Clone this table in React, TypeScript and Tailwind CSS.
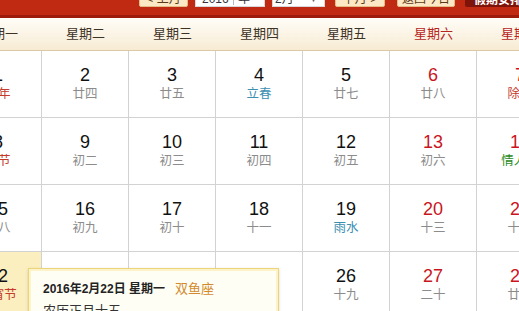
import React from 'react';

type Kind = 'plain' | 'fest' | 'term' | 'green';

interface Day {
  d: number;
  l: string;
  k?: Kind;
  today?: boolean;
}

const weekNames = ['星期一', '星期二', '星期三', '星期四', '星期五', '星期六', '星期日'];

const rows: Day[][] = [
  [
    { d: 1, l: '小年', k: 'fest' },
    { d: 2, l: '廿四' },
    { d: 3, l: '廿五' },
    { d: 4, l: '立春', k: 'term' },
    { d: 5, l: '廿七' },
    { d: 6, l: '廿八' },
    { d: 7, l: '除夕', k: 'fest' },
  ],
  [
    { d: 8, l: '春节', k: 'fest' },
    { d: 9, l: '初二' },
    { d: 10, l: '初三' },
    { d: 11, l: '初四' },
    { d: 12, l: '初五' },
    { d: 13, l: '初六' },
    { d: 14, l: '情人节', k: 'green' },
  ],
  [
    { d: 15, l: '初八' },
    { d: 16, l: '初九' },
    { d: 17, l: '初十' },
    { d: 18, l: '十一' },
    { d: 19, l: '雨水', k: 'term' },
    { d: 20, l: '十三' },
    { d: 21, l: '十四' },
  ],
  [
    { d: 22, l: '元宵节', k: 'fest', today: true },
    { d: 23, l: '十六' },
    { d: 24, l: '十七' },
    { d: 25, l: '十八' },
    { d: 26, l: '十九' },
    { d: 27, l: '二十' },
    { d: 28, l: '廿一' },
  ],
];

const lunarColor: Record<Kind, string> = {
  plain: 'text-[#8c8c8c]',
  fest: 'text-[#c43b2c]',
  term: 'text-[#3d8fb2]',
  green: 'text-[#2a8a22]',
};

function TopButton({ label, className }: { label: string; className: string }) {
  return (
    <div
      className={`h-[22px] flex items-end justify-center pb-[1px] leading-[12px] text-[12px] rounded-[2px] ${className}`}
    >
      {label}
    </div>
  );
}

function Cell({ day, col }: { day: Day; col: number }) {
  const weekend = col >= 5;
  const bg = day.today ? 'bg-[#fcefbf]' : 'bg-white';
  const numColor = weekend ? 'text-[#c8161d]' : 'text-[#111]';
  return (
    <div className={`border-r border-[#d2d2d2] flex flex-col items-center pt-[14px] ${bg}`}>
      <span className={`text-[18px] leading-[20px] ${numColor}`}>{day.d}</span>
      <span className={`mt-[1px] text-[12.5px] leading-[16px] ${lunarColor[day.k ?? 'plain']}`}>{day.l}</span>
    </div>
  );
}

export default function App() {
  return (
    <div className="relative w-[519px] h-[311px] overflow-hidden bg-white font-['Liberation_Sans','Noto_Sans_CJK_SC',sans-serif]">
      <div className="ml-[-45px] w-[609px]">
        {/* red toolbar, top half is cut off */}
        <div className="relative mt-[-24px] h-[42px] bg-[#c02a13] border-b-[3px] border-[#9c1b0b] flex items-end pb-[8px] pl-[184px]">
          <svg className="absolute left-[45px] top-[10px]" width="50" height="20" viewBox="0 0 50 20">
            <g stroke="#d8513a" strokeWidth="3" opacity="0.7">
              <line x1="10" y1="0" x2="22" y2="12" />
              <line x1="16" y1="0" x2="28" y2="12" />
              <line x1="22" y1="0" x2="33" y2="11" />
              <line x1="28" y1="0" x2="36" y2="8" />
            </g>
          </svg>
          <TopButton label="< 上月" className="w-[49px] bg-[#fce8c4] border border-[#e3bd85] text-[#5a3a1a]" />
          <div className="ml-[7px] w-[70px] h-[22px] bg-white border border-[#d8d8d8] flex items-end pb-[1px] pl-[6px] text-[12px] leading-[12px] text-[#333]">
            <span className="w-[32px] border-r border-[#bbb]">2016</span>
            <span className="ml-[4px]">年</span>
          </div>
          <div className="ml-[7px] w-[53px] h-[22px] bg-white border border-[#d8d8d8] flex items-end justify-between pb-[1px] px-[2px] text-[12px] leading-[12px] text-[#333]">
            <span>2月</span>
            <span className="text-[9px] text-[#666] mr-[4px]">▼</span>
          </div>
          <TopButton label="下月 >" className="ml-[10px] w-[50px] bg-[#fce8c4] border border-[#e3bd85] text-[#5a3a1a]" />
          <TopButton label="返回今日" className="ml-[12px] w-[58px] bg-[#fce8c4] border border-[#e3bd85] text-[#5a3a1a]" />
          <TopButton label="假期安排" className="ml-[10px] w-[66px] bg-[#7e130a] text-white font-bold" />
        </div>

        {/* weekday header */}
        <div className="grid grid-cols-7 h-[33px] border-b border-[#dac9a4] bg-gradient-to-b from-[#fffdf8] to-[#f7ebd3]">
          {weekNames.map((n, i) => (
            <div
              key={n}
              className={`flex items-center justify-center text-[13px] ${i >= 5 ? 'text-[#b5241d]' : 'text-[#3d3226]'}`}
            >
              {n}
            </div>
          ))}
        </div>

        {/* day grid */}
        {rows.map((row, ri) => (
          <div key={ri} className="grid grid-cols-7 h-[67px] border-b border-[#d2d2d2]">
            {row.map((day, ci) => (
              <Cell key={day.d} day={day} col={ci} />
            ))}
          </div>
        ))}
      </div>

      {/* hover tooltip */}
      <div className="absolute left-[28px] top-[268px] w-[251px] h-[80px] bg-[#fffef4] border border-[#ecd47a] shadow-[inset_0_0_0_2px_#fdf3c8,0_1px_3px_rgba(0,0,0,0.15)] pl-[14px] pt-[12px] text-[#222]">
        <div className="flex items-center leading-[16px]">
          <span className="text-[12px] font-bold">2016年2月22日 星期一</span>
          <span className="ml-[10px] text-[13px] text-[#d38a2e]">双鱼座</span>
        </div>
        <div className="mt-[6px] text-[13px] leading-[16px] text-[#333]">农历正月十五</div>
      </div>
    </div>
  );
}
